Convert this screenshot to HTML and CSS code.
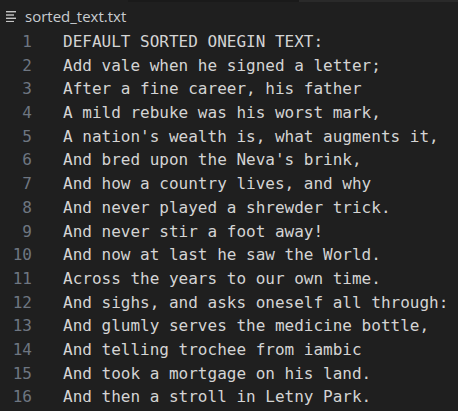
FILE: index.html
```html
<!DOCTYPE html>
<html>
<head>
<meta charset="utf-8">
<link rel="stylesheet" href="styles.css">
</head>
<body>
<div class="topstrip">
  <div class="seg-a"></div>
  <div class="seg-b"></div>
  <div class="seg-c"></div>
</div>
<div class="tabbar">
  <div class="tab">
    <svg class="icon" width="11" height="12" viewBox="0 0 11 12">
      <rect x="0" y="1" width="10" height="1.4" fill="#c5c5c5"/>
      <rect x="0" y="4.3" width="8" height="1.4" fill="#c5c5c5"/>
      <rect x="0" y="7.6" width="10" height="1.4" fill="#c5c5c5"/>
      <rect x="0" y="10.9" width="8" height="1.1" fill="#c5c5c5"/>
    </svg>
    <span class="name">sorted_text.txt</span>
  </div>
</div>
<div class="editor">
  <div class="line"><span class="num">1</span><span class="code">DEFAULT SORTED ONEGIN TEXT:</span></div>
  <div class="line"><span class="num">2</span><span class="code">Add vale when he signed a letter;</span></div>
  <div class="line"><span class="num">3</span><span class="code">After a fine career, his father</span></div>
  <div class="line"><span class="num">4</span><span class="code">A mild rebuke was his worst mark,</span></div>
  <div class="line"><span class="num">5</span><span class="code">A nation's wealth is, what augments it,</span></div>
  <div class="line"><span class="num">6</span><span class="code">And bred upon the Neva's brink,</span></div>
  <div class="line"><span class="num">7</span><span class="code">And how a country lives, and why</span></div>
  <div class="line"><span class="num">8</span><span class="code">And never played a shrewder trick.</span></div>
  <div class="line"><span class="num">9</span><span class="code">And never stir a foot away!</span></div>
  <div class="line"><span class="num">10</span><span class="code">And now at last he saw the World.</span></div>
  <div class="line"><span class="num">11</span><span class="code">Across the years to our own time.</span></div>
  <div class="line"><span class="num">12</span><span class="code">And sighs, and asks oneself all through:</span></div>
  <div class="line"><span class="num">13</span><span class="code">And glumly serves the medicine bottle,</span></div>
  <div class="line"><span class="num">14</span><span class="code">And telling trochee from iambic</span></div>
  <div class="line"><span class="num">15</span><span class="code">And took a mortgage on his land.</span></div>
  <div class="line"><span class="num">16</span><span class="code">And then a stroll in Letny Park.</span></div>
</div>
</body>
</html>
```
FILE: styles.css
```css
html, body {
  margin: 0;
  padding: 0;
  background: #1f1f1f;
  width: 458px;
  height: 411px;
  overflow: hidden;
}
.topstrip {
  display: flex;
  height: 2px;
}
.seg-a {
  width: 128px;
  background: #1f1f1f;
}
.seg-b {
  width: 171px;
  background: #1a1a1a;
}
.seg-c {
  flex: 1;
  background: #2a2a2a;
}
.tabbar {
  display: flex;
  height: 27px;
}
.tab {
  display: flex;
  align-items: center;
  padding-left: 6px;
}
.icon {
  margin-right: 8px;
  margin-top: 1px;
}
.name {
  font-family: "Open Sans", "Noto Sans", sans-serif;
  font-size: 15px;
  color: #c8ccd0;
  position: relative;
  top: 0px;
}
.editor {
  padding-top: 1px;
  font-family: "DejaVu Sans Mono", "Liberation Mono", monospace;
  font-size: 16px;
}
.line {
  display: flex;
  height: 23.7px;
  line-height: 23.7px;
  white-space: pre;
}
.num {
  width: 32px;
  text-align: right;
  color: #6e7681;
  flex: none;
}
.code {
  margin-left: 31px;
  color: #d4d4d4;
}
```
